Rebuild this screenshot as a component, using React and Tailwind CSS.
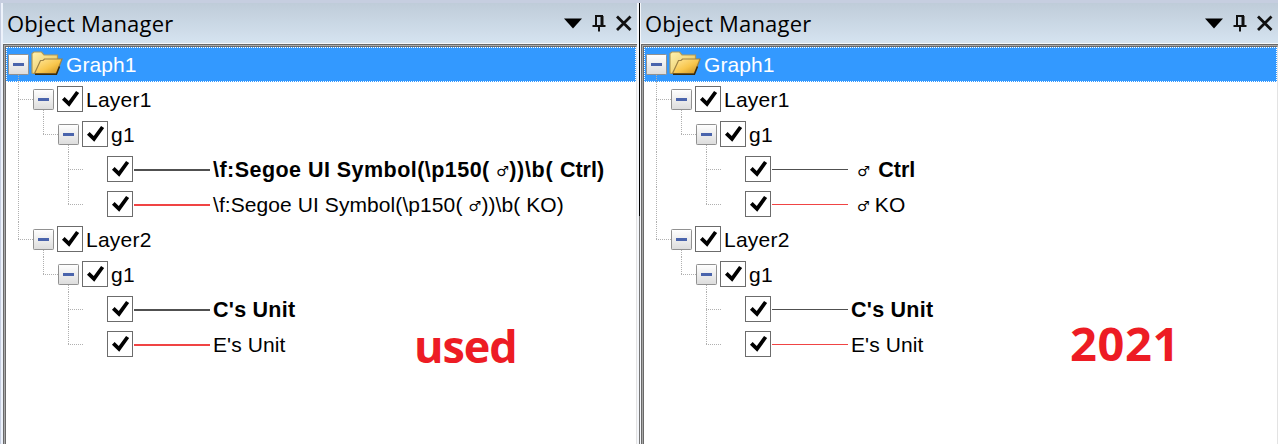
import React from "react";

const LINE = "#b0b0b0";

function Guide({ kind }) {
  return (
    <svg width="25" height="35" viewBox="0 0 25 35" className="shrink-0 overflow-visible" shapeRendering="crispEdges" fill="none" stroke={LINE} strokeWidth="1">
      {kind === "v" || kind === "tee" ? <path d="M12.5 0V36" strokeDasharray="1 1" /> : null}
      {kind === "elbow" ? <path d="M12.5 0V18" strokeDasharray="1 1" /> : null}
      {kind === "tee" || kind === "elbow" ? <path d="M12 17.5H27" strokeDasharray="1 1" /> : null}
    </svg>
  );
}

function Expander() {
  return (
    <svg width="25" height="35" viewBox="0 0 25 35" className="relative shrink-0 overflow-visible">
      <defs>
        <linearGradient id="btn" x1="0" y1="0" x2="0" y2="1">
          <stop offset="0" stopColor="#ffffff" />
          <stop offset="1" stopColor="#dcdcdc" />
        </linearGradient>
      </defs>
      <path d="M12.5 28V36" stroke={LINE} strokeDasharray="1 1" shapeRendering="crispEdges" />
      <rect x="2.5" y="7.5" width="20" height="20" rx="0.8" fill="url(#btn)" stroke="#919191" />
      <rect x="7" y="16" width="11" height="3" fill="#4a64ac" />
    </svg>
  );
}

function Check() {
  return (
    <svg width="26" height="26" viewBox="0 0 26 26" className="mb-px shrink-0">
      <rect x="0.5" y="0.5" width="25" height="25" fill="#fff" stroke="#6c6c6c" />
      <path d="M6.3 12.3L12 17.8L20.6 6" fill="none" stroke="#000" strokeWidth="3.8" />
    </svg>
  );
}

function Folder() {
  return (
    <svg width="32" height="26" viewBox="0 0 32 26" className="mb-px shrink-0">
      <defs>
        <linearGradient id="back" x1="0" y1="0" x2="1" y2="1">
          <stop offset="0" stopColor="#fff3b0" />
          <stop offset="1" stopColor="#e5bd52" />
        </linearGradient>
        <linearGradient id="front" x1="0" y1="0" x2="1" y2="1">
          <stop offset="0" stopColor="#ffe9a0" />
          <stop offset="0.55" stopColor="#f8c64c" />
          <stop offset="1" stopColor="#c98c1c" />
        </linearGradient>
      </defs>
      <path d="M1 22V2.5L3 1H10.5L13 4H26.5V9L23 22.5H3Z" fill="url(#back)" stroke="#b39a55" strokeWidth="1.2" />
      <path d="M3.5 22.5L9.5 9.5L12 9.5L13.5 8H31L25.5 22.5Z" fill="url(#front)" stroke="#9c8144" strokeWidth="1.2" />
      <path d="M4 23.3H25.4L28.5 15.5" fill="none" stroke="#3b2a08" strokeWidth="1.5" />
    </svg>
  );
}

function Male({ className }) {
  return (
    <span className={"inline-block -translate-y-px text-[14px] tracking-normal font-['DejaVu_Sans',sans-serif] leading-none " + className}>♂</span>
  );
}

function Row({ guides, expand, children }) {
  return (
    <div className="flex h-[35px] items-center whitespace-pre">
      {guides.map((g, i) => <Guide key={i} kind={g} />)}
      {expand ? <Expander /> : null}
      {children}
    </div>
  );
}

function Group({ guides, label }) {
  return (
    <Row guides={guides} expand>
      <span className="ml-px flex"><Check /></span>
      <span className="ml-[3px] tracking-[0.25px]">{label}</span>
    </Row>
  );
}

function Leaf({ guides, stroke, thick, bold, children }) {
  return (
    <Row guides={[...guides, ""]}>
      <span className="ml-px flex"><Check /></span>
      <svg width="76" height="3" className="ml-px shrink-0" shapeRendering="crispEdges">
        <rect x="0" y="1" width="76" height={thick ? 2 : 1} fill={stroke} />
      </svg>
      <span className={bold ? "ml-[3px] text-[21.5px] leading-[21px] font-bold tracking-[0.25px] pt-px" : "ml-[3px] leading-[21px] tracking-[0.08px]"}>{children}</span>
    </Row>
  );
}

function Header() {
  return (
    <div className="flex h-[40px] items-center justify-between bg-linear-to-b from-[#bfccd9] to-[#d5e3f0] pl-1 pr-1">
      <h2 className="font-['Open_Sans','Noto_Sans',sans-serif] text-[22px] leading-[40px] tracking-[0.2px] whitespace-nowrap">Object Manager</h2>
      <svg width="70" height="20" viewBox="0 0 70 20" fill="none">
        <path d="M1 5.5H19L10 15.5Z" fill="#000" />
        <path d="M32 3H40M33 3V13M29.5 13H42.5M36 13V18.5" stroke="#111" strokeWidth="2" />
        <path d="M39 3V13" stroke="#111" strokeWidth="3" />
        <path d="M54 3.5L67.5 17M67.5 3.5L54 17" stroke="#111" strokeWidth="2.8" />
      </svg>
    </div>
  );
}

function Panel({ thick, ctrl, ko, note }) {
  return (
    <section className="flex min-w-0 flex-1 flex-col">
      <Header />
      <div className="h-px bg-[#f4f7fb]" />
      <div className="flex flex-1 flex-col border-l border-t border-[#696969]">
        <div className="flex flex-1 flex-col border-l border-t border-[#a8a8a8]">
          <div className="relative flex-1 border-l border-t border-r border-t-[#696969] border-l-[#696969] border-r-[#e3e3e3] bg-white font-['Liberation_Sans',Arial,sans-serif] text-[21px] leading-none text-black">
            <div className="bg-[#3399ff] text-white outline-1 -outline-offset-1 outline-dotted outline-white">
              <Row guides={[]} expand>
                <span className="flex"><Folder /></span>
                <span className="ml-[3px] tracking-[0.1px]">Graph1</span>
              </Row>
            </div>
            <Group guides={["tee"]} label="Layer1" />
            <Group guides={["v", "elbow"]} label="g1" />
            <Leaf guides={["v", "", "tee"]} stroke="#505050" thick={thick} bold>{ctrl}</Leaf>
            <Leaf guides={["v", "", "elbow"]} stroke="#f04444" thick={thick}>{ko}</Leaf>
            <Group guides={["elbow"]} label="Layer2" />
            <Group guides={["", "elbow"]} label="g1" />
            <Leaf guides={["", "", "tee"]} stroke="#505050" thick={thick} bold>C's Unit</Leaf>
            <Leaf guides={["", "", "elbow"]} stroke="#f04444" thick={thick}>E's Unit</Leaf>
            {note}
          </div>
        </div>
      </div>
    </section>
  );
}

export default function App() {
  return (
    <main className="flex h-[444px] w-[1278px] flex-col overflow-hidden bg-[#c6cee0] pt-[3px] text-black">
      <div className="flex flex-1">
        <div className="w-px bg-[#c6cee0]" />
        <div className="w-[2px] bg-[#edf2fb]" />
        <div className="flex w-[634px]">
          <Panel
            thick
            ctrl={<><span className="tracking-[0.46px]">\f:Segoe UI Symbol(\p150( </span><Male className="w-[13px] font-bold" /><span className="tracking-[0.7px]">))\b( </span><span className="tracking-normal">Ctrl)</span></>}
            ko={<>\f:Segoe UI Symbol(\p150( <Male className="w-[13px] font-normal" />))\b( KO)</>}
            note={<div className="absolute left-[408px] top-[269px] font-['Open_Sans',sans-serif] text-[45px] font-bold leading-[60px] tracking-[-1.1px] text-[#ed1c24]">used</div>}
          />
        </div>
        <div className="w-[2px] bg-[#f4f6fa]" />
        <div className="flex w-px flex-col">
          <div className="h-[213px] bg-black" />
          <div className="flex-1 bg-[#777]" />
        </div>
        <div className="w-px bg-[#f4f6fa]" />
        <div className="flex flex-1">
          <Panel
            ctrl={<> <Male className="w-[15px] font-bold" /><span className="tracking-normal"> Ctrl</span></>}
            ko={<> <Male className="w-[12px] font-normal" /> KO</>}
            note={<div className="absolute left-[426px] top-[266px] font-['Open_Sans',sans-serif] text-[47px] font-bold leading-[60px] tracking-[0.6px] text-[#ed1c24]">2021</div>}
          />
        </div>
      </div>
    </main>
  );
}
